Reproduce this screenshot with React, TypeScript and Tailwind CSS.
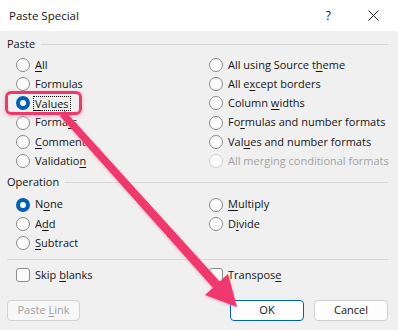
import React from "react";

const font = { fontFamily: '"Open Sans", "Noto Sans", Arial, sans-serif' };

type Opt = { pre: string; k?: string; post?: string; checked?: boolean; disabled?: boolean; focus?: boolean };

const Label = ({ pre, k, post }: { pre: string; k?: string; post?: string }) => (
  <span className="whitespace-nowrap">
    {pre}
    {k && <u className="underline decoration-1 underline-offset-2">{k}</u>}
    {post}
  </span>
);

const Radio = ({ o }: { o: Opt }) => (
  <div className={`flex h-[19.2px] items-center gap-[5px] ${o.disabled ? "text-[#a3a3a3]" : "text-[#141414]"}`}>
    {o.checked ? (
      <span className="box-border h-[14px] w-[14px] shrink-0 rounded-full border-[4px] border-[#005fb8] bg-white" />
    ) : (
      <span
        className={`box-border h-[14px] w-[14px] shrink-0 rounded-full border bg-[#fbfbfb] ${o.disabled ? "border-[#d0d0d0]" : "border-[#8b8b8b]"}`}
      />
    )}
    <span className={o.focus ? "-ml-[2px] border border-dotted border-black px-[1px] leading-[13px]" : ""}>
      <Label pre={o.pre} k={o.k} post={o.post} />
    </span>
  </div>
);

const Check = ({ o }: { o: Opt }) => (
  <div className="flex h-[19.2px] items-center gap-[5px] text-[#141414]">
    <span className="box-border h-[14px] w-[14px] shrink-0 rounded-[3px] border border-[#8b8b8b] bg-[#fbfbfb]" />
    <Label pre={o.pre} k={o.k} post={o.post} />
  </div>
);

const Legend = ({ text }: { text: string }) => (
  <div className="flex h-[16px] items-center gap-[6px] text-[#141414]">
    <span>{text}</span>
    <div className="h-px flex-1 bg-[#d8d8d8]" />
  </div>
);

const pasteLeft: Opt[] = [
  { pre: "", k: "A", post: "ll" },
  { pre: "Formulas" },
  { pre: "", k: "V", post: "alues", checked: true, focus: true },
  { pre: "Forma", k: "t", post: "s" },
  { pre: "", k: "C", post: "omments" },
  { pre: "Validatio", k: "n", post: "" },
];

const pasteRight: Opt[] = [
  { pre: "All using Source t", k: "h", post: "eme" },
  { pre: "All e", k: "x", post: "cept borders" },
  { pre: "Column ", k: "w", post: "idths" },
  { pre: "Fo", k: "r", post: "mulas and number formats" },
  { pre: "Val", k: "u", post: "es and number formats" },
  { pre: "All merging conditional formats", disabled: true },
];

const opLeft: Opt[] = [
  { pre: "N", k: "o", post: "ne", checked: true },
  { pre: "A", k: "d", post: "d" },
  { pre: "", k: "S", post: "ubtract" },
];

const opRight: Opt[] = [
  { pre: "", k: "M", post: "ultiply" },
  { pre: "D", k: "i", post: "vide" },
];

export default function App() {
  return (
    <div style={font} className="relative h-[330px] w-[398px] overflow-hidden bg-[#f0f0f0] text-[11px]">
      <div className="flex h-[31px] items-center bg-white pl-[9px] pr-[19px] text-[11.5px] text-[#141414]">
        <span>Paste Special</span>
        <span className="ml-auto mr-[37px] text-[12px]">?</span>
        <svg width="11" height="11" viewBox="0 0 11 11">
          <path d="M0.5 0.5L10.5 10.5M10.5 0.5L0.5 10.5" stroke="#222" strokeWidth="1" />
        </svg>
      </div>

      <div className="px-[7px] pt-[5px] pr-[10px]">
        <Legend text="Paste" />
        <div className="mt-[3.5px] grid grid-cols-[193px_1fr] pl-[9px]">
          <div>
            {pasteLeft.map((o, i) => (
              <Radio key={i} o={o} />
            ))}
          </div>
          <div>
            {pasteRight.map((o, i) => (
              <Radio key={i} o={o} />
            ))}
          </div>
        </div>

        <div className="mt-[4px]">
          <Legend text="Operation" />
        </div>
        <div className="mt-[4.4px] grid grid-cols-[193px_1fr] pl-[9px]">
          <div>
            {opLeft.map((o, i) => (
              <Radio key={i} o={o} />
            ))}
          </div>
          <div>
            {opRight.map((o, i) => (
              <Radio key={i} o={o} />
            ))}
          </div>
        </div>

        <div className="mt-[6px] h-px bg-[#d8d8d8]" />

        <div className="mt-[6px] grid grid-cols-[193px_1fr] pl-[9px]">
          <Check o={{ pre: "Skip ", k: "b", post: "lanks" }} />
          <Check o={{ pre: "Transpos", k: "e", post: "" }} />
        </div>

        <div className="mt-[15px] flex items-center">
          <button className="h-[21px] w-[73px] rounded-[4px] border border-[#d2d2d2] bg-[#f7f7f7] text-[#a0a0a0]">
            Paste <u className="underline decoration-1 underline-offset-2">L</u>ink
          </button>
          <button className="ml-auto h-[21px] w-[74px] rounded-[4px] border border-[#005fb8] bg-[#fdfdfd] text-[#141414]">
            OK
          </button>
          <button className="ml-[10px] h-[21px] w-[74px] rounded-[4px] border border-[#d0d0d0] bg-[#fdfdfd] text-[#141414]">
            Cancel
          </button>
        </div>
      </div>

      {/* highlight box around Values */}
      <div className="pointer-events-none absolute left-[5px] top-[91px] h-[24px] w-[77px] rounded-[6px] border-[3px] border-[#f0386d] shadow-[0_1px_4px_rgba(240,56,109,0.35)]" />

      {/* arrow */}
      <svg className="pointer-events-none absolute left-0 top-0" width="398" height="330" viewBox="0 0 398 330">
        <defs>
          <filter id="sh" x="-10%" y="-10%" width="120%" height="120%">
            <feDropShadow dx="0" dy="1" stdDeviation="1.5" floodColor="#f0386d" floodOpacity="0.35" />
          </filter>
        </defs>
        <g filter="url(#sh)">
          <polygon points="60,116 65,111 221,283 214,289" fill="#f0386d" />
          <polygon points="237,307 228,274 205,295" fill="#f0386d" />
        </g>
      </svg>
    </div>
  );
}
